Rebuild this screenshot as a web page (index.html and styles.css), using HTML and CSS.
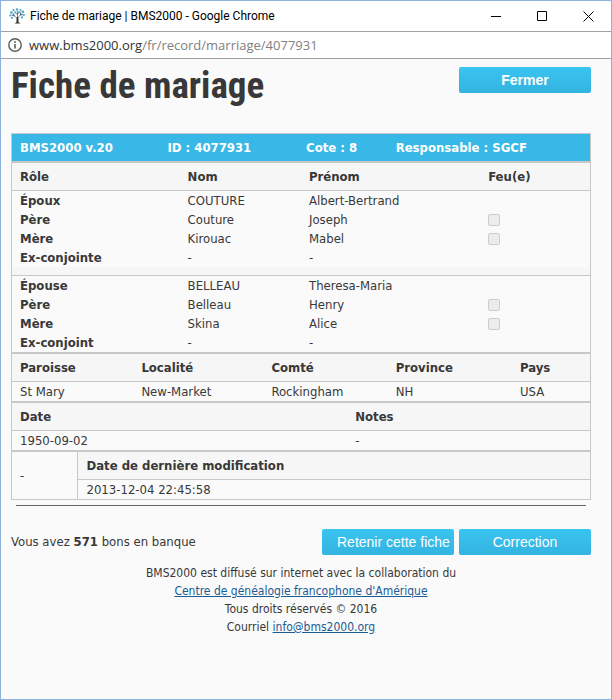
FILE: index.html
```html
<!DOCTYPE html>
<html lang="fr">
<head>
    <meta charset="UTF-8">
    <meta name="viewport" content="width=device-width, initial-scale=1.0">
    <title>Fiche de mariage | BMS2000</title>
    <link rel="stylesheet" href="styles.css">
</head>
<body>
    <div class="window">
        <header class="titlebar">
            <svg class="favicon" width="16" height="16" viewBox="0 0 16 16">
                <g fill="#4ba9cc">
                    <circle cx="8" cy="1.5" r="1.2"/>
                    <circle cx="4.5" cy="2.2" r="1.1"/>
                    <circle cx="11.5" cy="2" r="1.1"/>
                    <circle cx="2.2" cy="4.5" r="1.2"/>
                    <circle cx="14" cy="3.8" r="1.2"/>
                    <circle cx="1.3" cy="7.5" r="1.1"/>
                    <circle cx="14.8" cy="7" r="1.1"/>
                    <circle cx="3" cy="9.8" r="1.1"/>
                    <circle cx="13" cy="9.4" r="1.1"/>
                    <circle cx="6.3" cy="4.3" r="1"/>
                    <circle cx="10" cy="4.2" r="1"/>
                    <circle cx="4.5" cy="7" r="1"/>
                    <circle cx="12" cy="6.3" r="1"/>
                </g>
                <path d="M8.5 15V3M8.5 11L5.8 8.2 2.5 7M5.8 8.2L3.5 4.5M8.5 10L11 7.3 14 6.3M11 7.3L12 3.5M8.5 7L6.5 4.5M8.5 6L10 4.5" fill="none" stroke="#49606c" stroke-width=".7"/>
                <path d="M7.7 9h1.6l.3 5.2 1.9 1.3h-6l1.9-1.3z" fill="#333"/>
            </svg>
            <span class="caption">Fiche de mariage | BMS2000 - Google Chrome</span>
            <button type="button" class="control" aria-label="Réduire">
                <svg width="11" height="11" viewBox="0 0 11 11"><path d="M0 5.5h10" stroke="#000"/></svg>
            </button>
            <button type="button" class="control" aria-label="Agrandir">
                <svg width="11" height="11" viewBox="0 0 11 11"><path d="M.5.5h9v9h-9z" fill="none" stroke="#000"/></svg>
            </button>
            <button type="button" class="control" aria-label="Fermer la fenêtre">
                <svg width="11" height="11" viewBox="0 0 11 11"><path d="M.5.5l10 10M10.5.5l-10 10" stroke="#000"/></svg>
            </button>
        </header>

        <div class="addressbar">
            <svg width="14" height="14" viewBox="0 0 14 14">
                <circle cx="7" cy="7" r="6.2" fill="none" stroke="#5a5a5a" stroke-width="1.4"/>
                <path d="M7 6v4.5M7 3.3v1.6" stroke="#5a5a5a" stroke-width="1.6"/>
            </svg>
            <span class="url">www.bms2000.org<span class="path">/fr/record/marriage/4077931</span></span>
        </div>

        <main>
            <div class="heading">
                <h1>Fiche de mariage</h1>
                <button type="button" class="btn strong">Fermer</button>
            </div>

            <table class="banner">
                <tr>
                    <th class="version">BMS2000 v.20</th>
                    <th class="record">ID : 4077931</th>
                    <th class="cote">Cote : 8</th>
                    <th>Responsable : SGCF</th>
                </tr>
            </table>

            <table class="people">
                <thead>
                    <tr>
                        <th class="role">Rôle</th>
                        <th class="nom">Nom</th>
                        <th class="prenom">Prénom</th>
                        <th>Feu(e)</th>
                    </tr>
                </thead>
                <tbody>
                    <tr><th>Époux</th><td>COUTURE</td><td>Albert-Bertrand</td><td></td></tr>
                    <tr><th>Père</th><td>Couture</td><td>Joseph</td><td><input type="checkbox" aria-label="Père de l'époux feu" disabled></td></tr>
                    <tr><th>Mère</th><td>Kirouac</td><td>Mabel</td><td><input type="checkbox" aria-label="Mère de l'époux feue" disabled></td></tr>
                    <tr><th>Ex-conjointe</th><td>-</td><td>-</td><td></td></tr>
                    <tr class="separator"><td colspan="4"></td></tr>
                    <tr><th>Épouse</th><td>BELLEAU</td><td>Theresa-Maria</td><td></td></tr>
                    <tr><th>Père</th><td>Belleau</td><td>Henry</td><td><input type="checkbox" aria-label="Père de l'épouse feu" disabled></td></tr>
                    <tr><th>Mère</th><td>Skina</td><td>Alice</td><td><input type="checkbox" aria-label="Mère de l'épouse feue" disabled></td></tr>
                    <tr><th>Ex-conjoint</th><td>-</td><td>-</td><td></td></tr>
                </tbody>
            </table>

            <table class="place">
                <thead>
                    <tr>
                        <th class="paroisse">Paroisse</th>
                        <th class="localite">Localité</th>
                        <th class="comte">Comté</th>
                        <th class="province">Province</th>
                        <th>Pays</th>
                    </tr>
                </thead>
                <tbody>
                    <tr><td>St Mary</td><td>New-Market</td><td>Rockingham</td><td>NH</td><td>USA</td></tr>
                </tbody>
            </table>

            <table class="event">
                <thead>
                    <tr><th class="date">Date</th><th>Notes</th></tr>
                </thead>
                <tbody>
                    <tr><td>1950-09-02</td><td>-</td></tr>
                </tbody>
            </table>

            <table class="modified">
                <tr class="head">
                    <td class="mark" rowspan="2">-</td>
                    <th>Date de dernière modification</th>
                </tr>
                <tr><td>2013-12-04 22:45:58</td></tr>
            </table>

            <hr>

            <div class="actions">
                <p>Vous avez <b>571</b> bons en banque</p>
                <button type="button" class="btn">Retenir cette fiche</button>
                <button type="button" class="btn">Correction</button>
            </div>

            <footer>
                BMS2000 est diffusé sur internet avec la collaboration du<br>
                <a href="#">Centre de généalogie francophone d'Amérique</a><br>
                Tous droits réservés © 2016<br>
                Courriel <a href="mailto:info@bms2000.org">info@bms2000.org</a>
            </footer>
        </main>
    </div>
</body>
</html>
```

FILE: styles.css
```css
* {
    box-sizing: border-box;
}
body {
    margin: 0;
    background: #fafafa;
    color: #383838;
    font-family: "DejaVu Sans Condensed", "DejaVu Sans", sans-serif;
    font-size: 13px;
    line-height: 18px;
}
.window {
    min-height: 100vh;
    border: 1px solid #8fb2dc;
}

/* browser frame */
.titlebar {
    display: flex;
    align-items: center;
    height: 30px;
    padding-left: 8px;
    background: #fff;
    color: #000;
    font-family: Roboto, sans-serif;
    font-size: 12px;
}
.caption {
    flex: 1;
    margin-left: 5px;
}
.control {
    display: flex;
    align-items: center;
    justify-content: center;
    width: 46px;
    height: 30px;
    padding: 0;
    border: 0;
    background: none;
}
.addressbar {
    display: flex;
    align-items: center;
    gap: 7px;
    height: 28px;
    padding-left: 7px;
    border-top: 1px solid #a0a0a8;
    border-bottom: 1px solid #a0a0a8;
    background: #fff;
    color: #333;
    font-family: "Open Sans", sans-serif;
    font-size: 13px;
}
.path {
    color: #808080;
}

main {
    padding: 8px 20px 20px 10px;
}
.heading {
    display: flex;
    align-items: flex-start;
    justify-content: space-between;
    height: 66px;
}
h1 {
    margin: 0;
    font-family: "Roboto Condensed", "Liberation Sans", sans-serif;
    font-size: 37px;
    line-height: 38px;
}
.btn {
    width: 132px;
    height: 26px;
    padding: 0 15px;
    border: 0;
    border-radius: 2px;
    background: linear-gradient(#3ac4f0, #33b3e0);
    color: #fff;
    font-family: "Liberation Sans", sans-serif;
    font-size: 14px;
    white-space: nowrap;
}
.strong {
    font-weight: bold;
}

/* record tables */
table {
    width: 100%;
    table-layout: fixed;
    border: 1px solid #c8c8c8;
    border-spacing: 0;
}
th, td {
    height: 19px;
    padding: 0 8px;
    text-align: left;
}
thead th, .head th {
    height: 28px;
    border-bottom: 1px solid #c8c8c8;
    background: #f6f6f6;
}
.banner th {
    height: 27px;
    background: #38b8e6;
    color: #fff;
}
.version { width: 25.5%; }
.record { width: 24%; }
.cote { width: 15.5%; }

.role { width: 29%; }
.nom { width: 21%; }
.prenom { width: 31%; }

.paroisse { width: 21%; }
.localite { width: 22.5%; }
.comte { width: 21.5%; }
.province { width: 21.5%; }

.date { width: 58%; }
.mark {
    width: 11.5%;
    border-right: 1px solid #c8c8c8;
}
.separator td {
    height: 9px;
    border-bottom: 1px solid #c8c8c8;
    background: #f6f6f6;
}
input[type="checkbox"] {
    display: block;
    appearance: none;
    width: 12px;
    height: 12px;
    margin: 0;
    border: 1px solid #ccc;
    border-radius: 2px;
    background: #ececec;
}

hr {
    margin: 5px 5px 23px;
    border: 0;
    border-top: 1px solid #666;
}
.actions {
    display: flex;
    align-items: center;
    gap: 5px;
}
.actions p {
    flex: 1;
    margin: 0;
}
footer {
    margin-top: 9px;
    font-size: 12px;
    text-align: center;
}
a {
    color: #1a5c94;
}
```
